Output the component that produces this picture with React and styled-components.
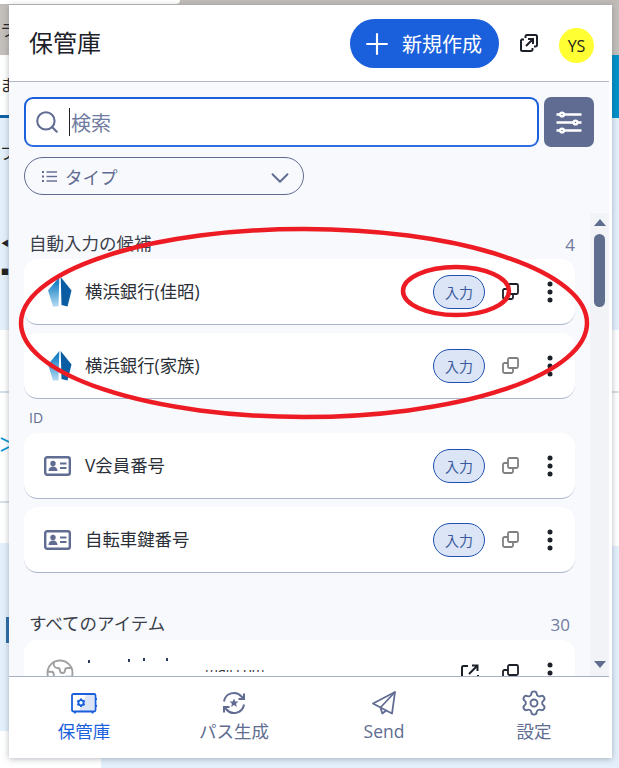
import styled, { createGlobalStyle } from "styled-components";
import { ChevronDown, Earth, Plus, Search, Settings } from "lucide-react";

const GlobalStyle = createGlobalStyle`
  html, body {
    margin: 0;
    height: 100%;
    overflow: hidden;
    background: #e3f0fb;
    font-family: "Open Sans", "Noto Sans CJK JP", sans-serif;
  }
  * {
    box-sizing: border-box;
  }
`;

const Page = styled.div`
  position: relative;
  width: 619px;
  height: 768px;
  display: grid;
  grid-template-columns: 9px 603px 7px;
  grid-template-rows: 5px 753px 10px;
  overflow: hidden;
`;

const TopStrip = styled.div`
  grid-column: 1 / 4;
  background: #c0bbb7;
`;

const TopTab = styled.div`
  width: 180px;
  height: 4px;
  background: #fff;
  border-radius: 0 0 10px 0;
`;

const SideStrip = styled.div`
  display: flex;
  flex-direction: column;
  overflow: hidden;
`;

const Band = styled.div`
  height: ${(p) => p.$h}px;
  flex: none;
  background: ${(p) => p.$bg};
  display: flex;
  align-items: center;
  justify-content: ${(p) => p.$justify || "flex-start"};
  overflow: hidden;
  font-size: ${(p) => p.$size || 16}px;
  color: #222;
  line-height: 1;
`;

const BottomStrip = styled.div`
  grid-column: 1 / 4;
  display: flex;
`;

const BottomWhite = styled.div`
  width: 101px;
  background: #fff;
`;

const Popup = styled.div`
  z-index: 1;
  display: flex;
  flex-direction: column;
  background: #f8f9fc;
  border-right: 3px solid #fff;
  box-shadow: 0 1px 6px rgba(60, 70, 90, 0.38);
`;

const Header = styled.header`
  height: 77px;
  flex: none;
  display: flex;
  align-items: center;
  padding: 0 15px 0 20px;
  background: #fff;
  border-bottom: 1px solid #b4b7cc;
`;

const Title = styled.h1`
  flex: 1;
  margin: 0 0 3px;
  font-size: 24px;
  font-weight: 400;
  color: #1b2029;
`;

const NewButton = styled.button`
  width: 149px;
  height: 49px;
  margin-top: 1px;
  padding: 0 0 0 10px;
  display: flex;
  align-items: center;
  gap: 8px;
  border: 0;
  border-radius: 25px;
  background: #1a5fdb;
  color: #fff;
  font: inherit;
  font-size: 20px;
`;

const PopOut = styled.span`
  display: flex;
  margin: 0 21px 0 21px;
  color: #1b2029;
`;

const Avatar = styled.div`
  width: 35px;
  height: 35px;
  margin-top: 5px;
  border-radius: 50%;
  background: #ffff33;
  color: #222;
  display: flex;
  align-items: center;
  justify-content: center;
  font-size: 16px;
`;

const Filters = styled.div`
  height: 131px;
  flex: none;
  padding: 15px 15px 0;
`;

const SearchRow = styled.div`
  display: flex;
  gap: 5px;
  height: 50px;
`;

const SearchBox = styled.div`
  flex: 1;
  display: flex;
  align-items: center;
  padding-left: 8px;
  background: #fff;
  border: 2px solid #1a5fdb;
  border-bottom-color: #2f6de0;
  border-radius: 9px;
  color: #606c91;
`;

const Caret = styled.span`
  width: 1px;
  height: 28px;
  margin-left: 9px;
  background: #1b2029;
`;

const Placeholder = styled.span`
  margin-left: 1px;
  font-size: 20px;
  color: #6f7ba0;
`;

const FilterButton = styled.button`
  width: 50px;
  border: 0;
  padding: 0;
  border-radius: 7px;
  background: #606c91;
  display: flex;
  align-items: center;
  justify-content: center;
`;

const TypeSelect = styled.div`
  width: 280px;
  height: 38px;
  margin-top: 10px;
  padding: 0 8px 0 17px;
  display: flex;
  align-items: center;
  gap: 8px;
  border: 1px solid #606c91;
  border-radius: 19px;
  color: #606c91;
  font-size: 17.5px;
`;

const TypeLabel = styled.span`
  flex: 1;
`;

const TypeChevron = styled.span`
  display: flex;
  margin-top: 3px;
`;

const ScrollArea = styled.div`
  flex: 1;
  min-height: 0;
  display: flex;
  overflow: hidden;
`;

const List = styled.div`
  flex: 1;
  min-width: 0;
  padding: 18px 15px 0;
  overflow: hidden;
`;

const Section = styled.section`
  margin-top: ${(p) => p.$gap || 0}px;
`;

const SectionHead = styled.div`
  height: ${(p) => p.$h || 22}px;
  margin-bottom: ${(p) => p.$mb || 6}px;
  padding: 0 ${(p) => p.$inset || 0}px 0 5px;
  display: flex;
  align-items: center;
  justify-content: space-between;
`;

const SectionTitle = styled.h2`
  margin: 0;
  font-size: 17.5px;
  font-weight: 400;
  color: #3a3f4b;
`;

const SmallTitle = styled.h3`
  margin: 0;
  font-size: 14px;
  font-weight: 400;
  color: #606c91;
`;

const Count = styled.span`
  padding-top: 4px;
  font-size: 17px;
  color: #707ca0;
`;

const Card = styled.div`
  height: 66px;
  margin-bottom: 8px;
  padding-right: 5px;
  display: flex;
  align-items: center;
  background: #fff;
  border-radius: 14px;
  border-bottom: 1px solid #aab4cc;
`;

const IconSlot = styled.div`
  width: 61px;
  flex: none;
  display: flex;
  justify-content: center;
  padding-left: ${(p) => p.$left ?? 11}px;
`;

const ItemName = styled.div`
  flex: 1;
  margin-top: -2px;
  font-size: 17.4px;
  color: #2b2f38;
`;

const FillButton = styled.button`
  width: 52px;
  height: 34px;
  margin-right: 5px;
  padding: 0;
  border: 1px solid #1f4fb0;
  border-radius: 17px;
  background: #dbe5f6;
  color: #3a5a9e;
  font: inherit;
  font-size: 14px;
`;

const ActionSlot = styled.span`
  width: 40px;
  flex: none;
  display: flex;
  justify-content: center;
  color: ${(p) => p.$color || "#1b2029"};
`;

const Redacted = styled.div`
  flex: 1;
  height: 14px;
  margin-top: -16px;
  display: flex;
  align-items: flex-end;
  overflow: hidden;
`;

const Speck = styled.span`
  width: 2px;
  height: 3px;
  flex: none;
  margin-left: ${(p) => p.$left}px;
  margin-bottom: ${(p) => p.$lift}px;
  background: #2a3a5a;
`;

const RedactedText = styled.span`
  margin-left: 37px;
  margin-bottom: -1px;
  height: 3px;
  overflow: hidden;
  font-size: 14px;
  line-height: 0;
  color: #333;
`;

const Track = styled.div`
  width: 19px;
  flex: none;
  padding: 6px 0 8px;
  display: flex;
  flex-direction: column;
  align-items: center;
  background: #f1f3f7;
`;

const Arrow = styled.span`
  width: 0;
  height: 0;
  border-left: 6.5px solid transparent;
  border-right: 6.5px solid transparent;
  border-${(p) => (p.$down ? "top" : "bottom")}: 7px solid #5f6d8f;
`;

const Thumb = styled.span`
  width: 11px;
  height: 73px;
  margin: 8px 0 auto;
  border-radius: 6px;
  background: #5f6d8f;
`;

const Footer = styled.nav`
  height: 82px;
  flex: none;
  display: grid;
  grid-template-columns: repeat(4, 150px);
  background: #fff;
  border-top: 1px solid #a9b0c6;
`;

const Tab = styled.div`
  display: flex;
  flex-direction: column;
  align-items: center;
  padding-top: 13px;
  color: ${(p) => (p.$active ? "#1a5fdb" : "#606c91")};
`;

const TabIcon = styled.span`
  height: 26px;
  display: flex;
  align-items: center;
`;

const TabLabel = styled.span`
  margin-top: 3px;
  font-size: 17.5px;
  line-height: 24px;
`;

const Marks = styled.svg`
  position: absolute;
  left: 0;
  top: 0;
  z-index: 2;
  pointer-events: none;
`;

const PopOutIcon = ({ size = 18 }) => (
  <svg width={size} height={size} viewBox="0 0 18 18" fill="none" stroke="currentColor" strokeWidth="2">
    <path d="M5.5 4V2.5a1.5 1.5 0 0 1 1.5-1.5h8.5A1.5 1.5 0 0 1 17 2.5V11a1.5 1.5 0 0 1-1.5 1.5H14" />
    <path d="M1 5.5v10A1.5 1.5 0 0 0 2.5 17H11a1.5 1.5 0 0 0 1.5-1.5V14" />
    <path d="M1 5.5h3M6 12l6.5-6.5M8 5h5v5" />
  </svg>
);

const LaunchIcon = () => (
  <svg width="18" height="18" viewBox="0 0 18 18" fill="none" stroke="currentColor" strokeWidth="2">
    <path d="M7 2H2.5A1.5 1.5 0 0 0 1 3.5V15.5A1.5 1.5 0 0 0 2.5 17h13a1.5 1.5 0 0 0 1.5-1.5V11" />
    <path d="M8 10l8-8M11 1.5h5.5V7" />
  </svg>
);

const SlidersIcon = () => (
  <svg width="26" height="24" viewBox="0 0 26 24" stroke="#fff" strokeWidth="2.4" fill="#606c91">
    <path d="M0.500 4.500h25M0.500 12.500h25M0.500 20.500h25" />
    <circle cx="6" cy="4.500" r="1.900" />
    <circle cx="19.500" cy="12.500" r="1.900" />
    <circle cx="6" cy="20.500" r="1.900" />
  </svg>
);

const ListIcon = () => (
  <svg width="15" height="13" viewBox="0 0 15 13" fill="#606c91">
    <rect x="0" y="1" width="2" height="2" />
    <rect x="0" y="5.500" width="2" height="2" />
    <rect x="0" y="10" width="2" height="2" />
    <rect x="4.500" y="1.300" width="10.500" height="1.400" />
    <rect x="4.500" y="5.800" width="10.500" height="1.400" />
    <rect x="4.500" y="10.300" width="10.500" height="1.400" />
  </svg>
);

const BankLogo = ({ id }) => (
  <svg width="24" height="30" viewBox="0 0 24 30">
    <defs>
      <linearGradient id={id} x1="0" y1="0" x2="0" y2="1">
        <stop offset="0.200" stopColor="#1b82c6" />
        <stop offset="1" stopColor="#b5dbf3" />
      </linearGradient>
    </defs>
    <path d="M11.300 0L0 13.500 5 29.500h5.500Z" fill={`url(#${id})`} />
    <path d="M12.700 0L23.500 13.500 19.500 29.500 13.500 28Z" fill="#0b5da3" />
  </svg>
);

const IdCardIcon = () => (
  <svg width="27" height="20" viewBox="0 0 27 20">
    <rect x="1.200" y="1.200" width="24.600" height="17.600" rx="2" fill="none" stroke="#606c91" strokeWidth="2.400" />
    <circle cx="9" cy="7.500" r="2.700" fill="#606c91" />
    <path d="M4.500 15c0-3 2-4.500 4.500-4.500s4.500 1.500 4.500 4.500Z" fill="#606c91" />
    <path d="M16 7.500h6.500M16 12h6.500" stroke="#606c91" strokeWidth="2" />
  </svg>
);

const CopyIcon = () => (
  <svg width="17" height="17" viewBox="0 0 17 17" fill="none" stroke="currentColor" strokeWidth="1.800">
    <rect x="6" y="1" width="10" height="10" rx="1.500" />
    <path d="M6 6H2.500A1.500 1.500 0 0 0 1 7.500v7A1.500 1.500 0 0 0 2.500 16h7a1.500 1.500 0 0 0 1.500-1.500V11" />
  </svg>
);

const KebabIcon = () => (
  <svg width="6" height="22" viewBox="0 0 6 22" fill="currentColor">
    <circle cx="3" cy="3" r="2.500" />
    <circle cx="3" cy="11" r="2.500" />
    <circle cx="3" cy="19" r="2.500" />
  </svg>
);

const VaultIcon = () => (
  <svg width="26" height="21" viewBox="0 0 26 21" fill="none" stroke="#1a5fdb" strokeWidth="1.800">
    <path d="M15 2h8v16h-15Z" fill="#dbe5f6" stroke="none" />
    <rect x="1" y="1" width="23.500" height="17.500" rx="1.500" />
    <path d="M4 18.500v2M21.500 18.500v2M24.500 6h1.500M24.500 13h1.500" />
    <circle cx="10" cy="9.800" r="2.600" />
    <path d="M10 5.500v1.700M10 12.400v1.700M6.300 7.700l1.500.9M12.200 11l1.500.9M6.300 11.900l1.500-.9M12.200 8.600l1.500-.9" strokeWidth="2" />
  </svg>
);

const GenerateIcon = () => (
  <svg width="24" height="24" viewBox="0 0 24 24" fill="none" stroke="currentColor" strokeWidth="2">
    <path d="M2 10.500A10 10 0 0 1 19.500 5.500L22 8" />
    <path d="M22 2.500V8h-5.500" />
    <path d="M22 13.500A10 10 0 0 1 4.500 18.500L2 16" />
    <path d="M2 21.500V16h5.500" />
    <path
      d="M12 7.500l1.300 3h3.200l-2.500 2.200.9 3.200-2.900-1.800-2.900 1.800.9-3.200-2.500-2.200h3.200Z"
      fill="currentColor"
      stroke="none"
    />
  </svg>
);

const SendIcon = () => (
  <svg width="24" height="24" viewBox="0 0 24 24" fill="none" stroke="currentColor" strokeWidth="1.800" strokeLinejoin="round">
    <path d="M23 1L1 12.500l7.500 4L20 22.500Z" />
    <path d="M23 1L8.500 16.500l1.800 6 4.200-3.300" />
  </svg>
);

const Item = ({ icon, left, name, dimCopy = true }) => (
  <Card>
    <IconSlot $left={left}>{icon}</IconSlot>
    <ItemName>{name}</ItemName>
    <FillButton>入力</FillButton>
    <ActionSlot $color={dimCopy ? "#808080" : "#1b2029"}>
      <CopyIcon />
    </ActionSlot>
    <ActionSlot>
      <KebabIcon />
    </ActionSlot>
  </Card>
);

const App = () => {
  return (
    <Page>
      <GlobalStyle />
      <TopStrip>
        <TopTab />
      </TopStrip>

      <SideStrip>
        <Band $h={50} $bg="#c3bfba">ラ</Band>
        <Band $h={60} $bg="#fff">ま</Band>
        <Band $h={3} $bg="#0b5fa5" />
        <Band $h={27} $bg="#e3f0fb" />
        <Band $h={16} $bg="#e3f0fb">ブ</Band>
        <Band $h={74} $bg="#e3f0fb" />
        <Band $h={16} $bg="#e3f0fb" $size={8} $justify="flex-end">◀</Band>
        <Band $h={13} $bg="#e3f0fb" />
        <Band $h={16} $bg="#e3f0fb" $size={8} $justify="flex-end">■</Band>
        <Band $h={50} $bg="#e3f0fb" />
        <Band $h={61} $bg="#fff" />
        <Band $h={2} $bg="#d5dfe8" />
        <Band $h={44} $bg="#fff" />
        <Band $h={16} $bg="#fff">
          <svg width="9" height="16" viewBox="0 0 9 16" fill="none" stroke="#0a8fd0" strokeWidth="1.800">
            <path d="M1 1l8 4M9 10l-8 4" />
          </svg>
        </Band>
        <Band $h={48} $bg="#fff" />
        <Band $h={2} $bg="#d5dfe8" />
        <Band $h={40} $bg="#fff" />
        <Band $h={74} $bg="#e3f0fb" />
        <Band $h={26} $bg="#e3f0fb" $justify="flex-end">
          <svg width="3" height="26" viewBox="0 0 3 26">
            <rect width="3" height="26" fill="#2a6ea8" />
          </svg>
        </Band>
        <Band $h={88} $bg="#e3f0fb" />
        <Band $h={30} $bg="#fff" />
      </SideStrip>

      <Popup>
        <Header>
          <Title>保管庫</Title>
          <NewButton>
            <Plus size={34} strokeWidth={1.500} />
            新規作成
          </NewButton>
          <PopOut>
            <PopOutIcon />
          </PopOut>
          <Avatar>YS</Avatar>
        </Header>

        <Filters>
          <SearchRow>
            <SearchBox>
              <Search size={26} strokeWidth={1.900} />
              <Caret />
              <Placeholder>検索</Placeholder>
            </SearchBox>
            <FilterButton>
              <SlidersIcon />
            </FilterButton>
          </SearchRow>
          <TypeSelect>
            <ListIcon />
            <TypeLabel>タイプ</TypeLabel>
            <TypeChevron>
              <ChevronDown size={30} strokeWidth={1.500} />
            </TypeChevron>
          </TypeSelect>
        </Filters>

        <ScrollArea>
          <List>
            <Section>
              <SectionHead>
                <SectionTitle>自動入力の候補</SectionTitle>
                <Count>4</Count>
              </SectionHead>
              <Item icon={<BankLogo id="bank-a" />} name="横浜銀行(佳昭)" dimCopy={false} />
              <Item icon={<BankLogo id="bank-b" />} name="横浜銀行(家族)" />
            </Section>
            <Section>
              <SectionHead $h={21} $mb={5}>
                <SmallTitle>ID</SmallTitle>
              </SectionHead>
              <Item icon={<IdCardIcon />} left={6} name="V会員番号" />
              <Item icon={<IdCardIcon />} left={6} name="自転車鍵番号" />
            </Section>
            <Section $gap={38}>
              <SectionHead $inset={5} $mb={7}>
                <SectionTitle>すべてのアイテム</SectionTitle>
                <Count>30</Count>
              </SectionHead>
              <Card>
                <IconSlot $left={10}>
                  <Earth size={30} strokeWidth={1.500} color="#a0a0a0" />
                </IconSlot>
                <Redacted>
                  <Speck $left={3} $lift={9} />
                  <Speck $left={38} $lift={10} />
                  <Speck $left={13} $lift={11} />
                  <Speck $left={21} $lift={11} />
                  <RedactedText>mail.com</RedactedText>
                </Redacted>
                <ActionSlot>
                  <LaunchIcon />
                </ActionSlot>
                <ActionSlot>
                  <CopyIcon />
                </ActionSlot>
                <ActionSlot>
                  <KebabIcon />
                </ActionSlot>
              </Card>
            </Section>
          </List>
          <Track>
            <Arrow />
            <Thumb />
            <Arrow $down />
          </Track>
        </ScrollArea>

        <Footer>
          <Tab $active>
            <TabIcon>
              <VaultIcon />
            </TabIcon>
            <TabLabel>保管庫</TabLabel>
          </Tab>
          <Tab>
            <TabIcon>
              <GenerateIcon />
            </TabIcon>
            <TabLabel>パス生成</TabLabel>
          </Tab>
          <Tab>
            <TabIcon>
              <SendIcon />
            </TabIcon>
            <TabLabel>Send</TabLabel>
          </Tab>
          <Tab>
            <TabIcon>
              <Settings size={28} strokeWidth={1.600} />
            </TabIcon>
            <TabLabel>設定</TabLabel>
          </Tab>
        </Footer>
      </Popup>

      <SideStrip>
        <Band $h={50} $bg="#c3bfba" />
        <Band $h={63} $bg="#0090c8" />
        <Band $h={212} $bg="#e3f0fb" />
        <Band $h={61} $bg="#fff" />
        <Band $h={2} $bg="#d5dfe8" />
        <Band $h={153} $bg="#fff" />
        <Band $h={212} $bg="#e3f0fb" />
      </SideStrip>

      <BottomStrip>
        <BottomWhite />
      </BottomStrip>

      <Marks width="619" height="768" viewBox="0 0 619 768" fill="none" stroke="#ed1c24">
        <ellipse cx="304" cy="323" rx="283" ry="94" strokeWidth="4.500" />
        <ellipse cx="456" cy="291" rx="53" ry="24" strokeWidth="4.500" />
      </Marks>
    </Page>
  );
};

export default App;
